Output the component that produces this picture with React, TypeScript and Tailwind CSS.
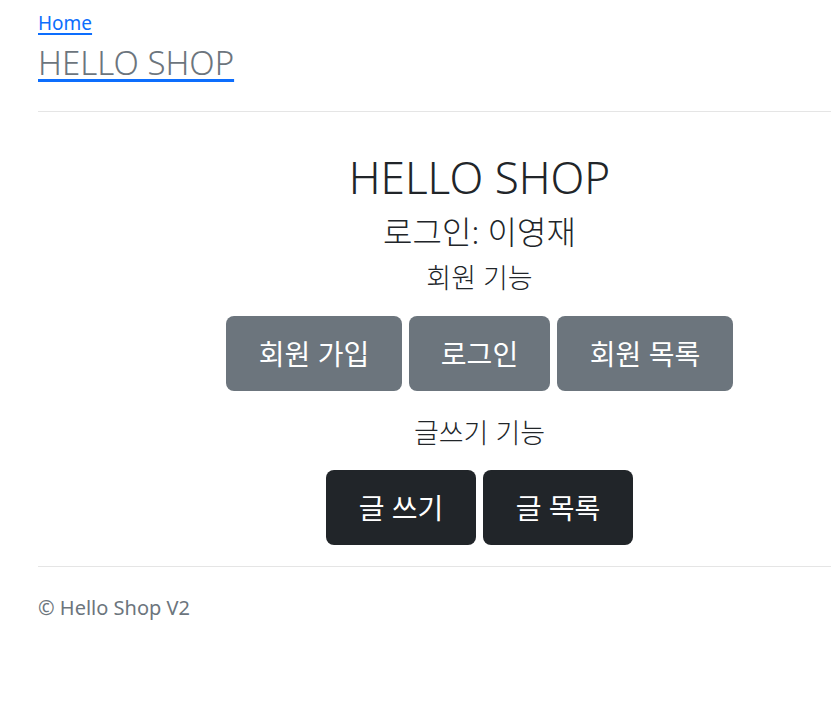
export default function App() {
  return (
    <div className="w-[831px] min-h-[707px] overflow-hidden bg-white" style={{ fontFamily: '"Noto Sans", "Noto Sans CJK KR", sans-serif' }}>
      <div className="w-[883px] ml-[38px]">
        <div className="pt-[9px]">
          <a href="#" className="block w-fit text-[19px] leading-[28px] text-[#0d6efd] underline decoration-2 underline-offset-[3px]">Home</a>
          <a href="#" className="block w-fit text-[#0d6efd] underline decoration-[#0d6efd] decoration-[3px] underline-offset-[4px] mt-[6px]">
            <span className="text-[33px] leading-[40px] font-light text-[#6c757d]">HELLO SHOP</span>
          </a>
        </div>
        <hr className="mt-[28px] border-t border-[#e5e5e5]" />
        <div className="flex flex-col items-center text-[#212529] pt-[37px]">
          <h1 className="text-[44px] leading-[56px] font-light">HELLO SHOP</h1>
          <h3 className="text-[32px] leading-[40px] mt-[7px] font-light">로그인: 이영재</h3>
          <h5 className="text-[27px] leading-[36px] mt-[8px] font-light">회원 기능</h5>
          <div className="flex gap-[7px] mt-[20px]">
            <button className="w-[176px] h-[75px] rounded-[8px] bg-[#6c757d] text-white text-[28px]">회원 가입</button>
            <button className="w-[141px] h-[75px] rounded-[8px] bg-[#6c757d] text-white text-[28px]">로그인</button>
            <button className="w-[176px] h-[75px] rounded-[8px] bg-[#6c757d] text-white text-[28px]">회원 목록</button>
          </div>
          <h5 className="text-[27px] leading-[36px] mt-[24px] font-light">글쓰기 기능</h5>
          <div className="flex gap-[7px] mt-[19px]">
            <button className="w-[150px] h-[75px] rounded-[8px] bg-[#212529] text-white text-[28px]">글 쓰기</button>
            <button className="w-[150px] h-[75px] rounded-[8px] bg-[#212529] text-white text-[28px]">글 목록</button>
          </div>
        </div>
        <hr className="mt-[21px] border-t border-[#e5e5e5]" />
        <p className="mt-[27px] text-[20px] leading-[28px] text-[#6c757d]">© Hello Shop V2</p>
      </div>
    </div>
  );
}
